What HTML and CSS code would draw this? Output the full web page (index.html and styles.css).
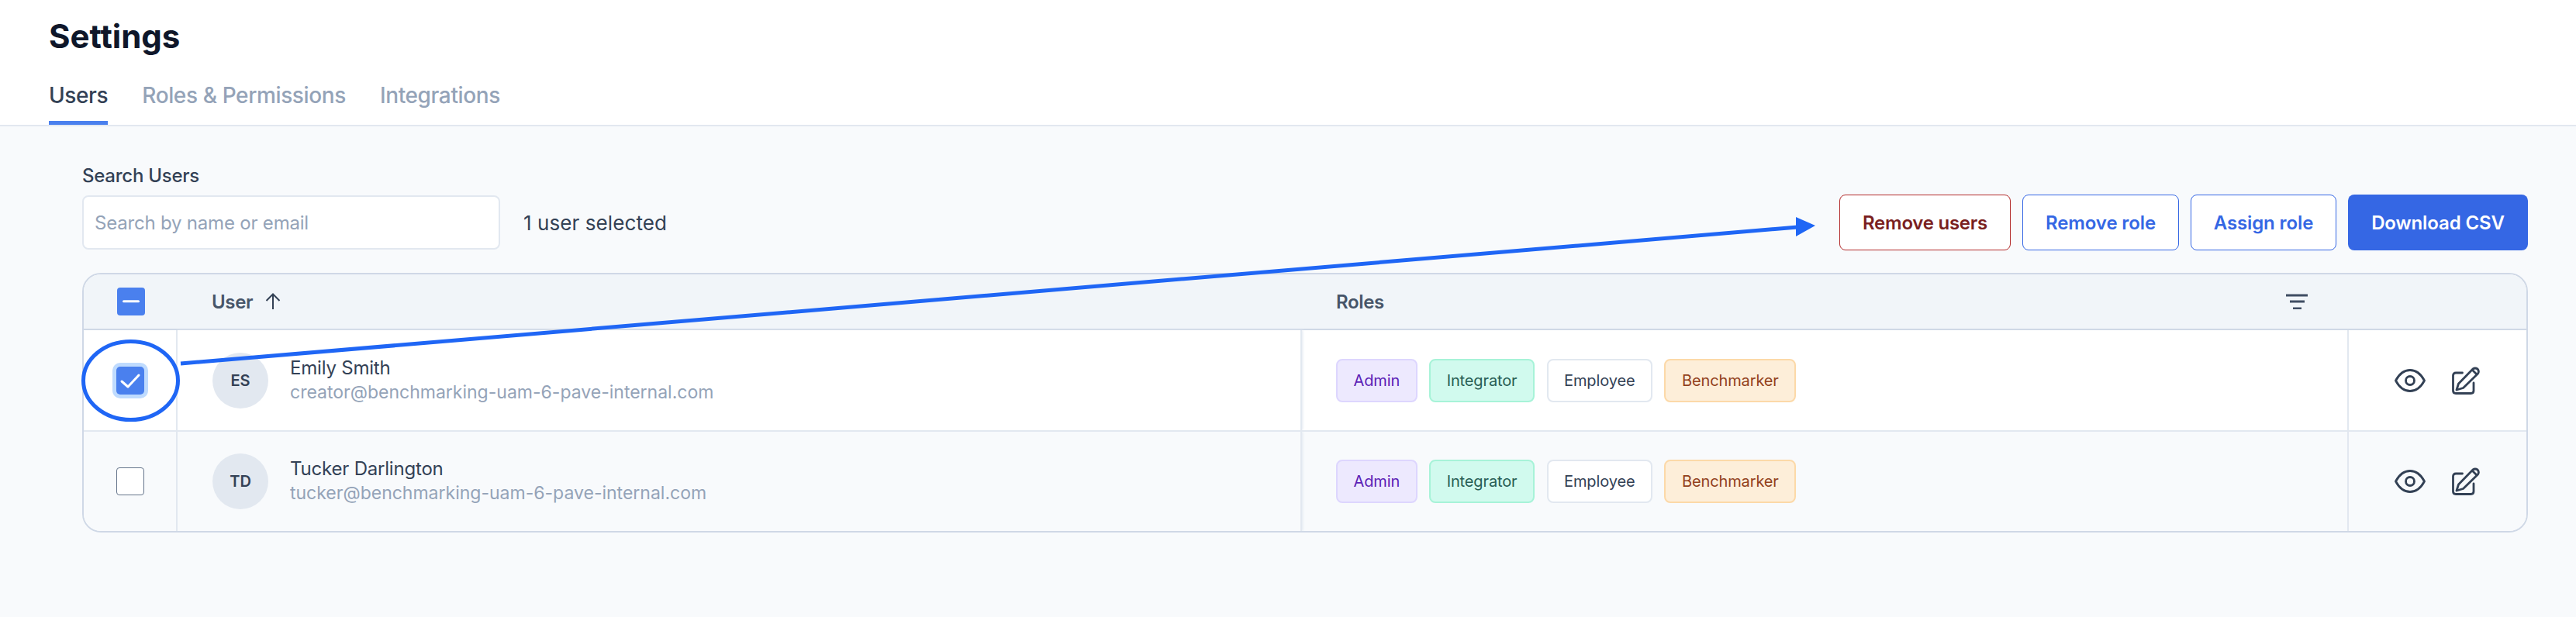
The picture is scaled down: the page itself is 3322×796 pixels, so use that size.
FILE: index.html
```html
<!DOCTYPE html>
<html lang="en">
<head>
<meta charset="utf-8">
<title>Settings</title>
<link rel="stylesheet" href="styles.css">
</head>
<body>
<div class="page">
  <header class="top">
    <h1 class="title">Settings</h1>
    <nav class="tabs">
      <a class="tab active">Users</a>
      <a class="tab">Roles &amp; Permissions</a>
      <a class="tab">Integrations</a>
    </nav>
  </header>
  <main class="main">
    <label class="search-label">Search Users</label>
    <div class="toolbar">
      <div class="search-input">Search by name or email</div>
      <span class="selected">1 user selected</span>
      <div class="actions">
        <button class="btn danger">Remove users</button>
        <button class="btn outline remove">Remove role</button>
        <button class="btn outline assign">Assign role</button>
        <button class="btn primary">Download CSV</button>
      </div>
    </div>
    <section class="table">
      <div class="row head">
        <div class="cell check"><span class="box on"><svg width="36" height="36" viewBox="0 0 36 36"><path d="M8.500 17.700H27.500" class="glyph"/></svg></span></div>
        <div class="cell user-head">User <svg class="sort" width="20" height="22" viewBox="0 0 20 22"><path d="M10 21V1.500M1.500 10L10 1.500L18.500 10"/></svg></div>
        <div class="cell roles-head">Roles <svg class="filter" width="30" height="20" viewBox="0 0 30 20"><path d="M1 2H29M6 10H25M10 19H21"/></svg></div>
        <div class="cell tools"></div>
      </div>
      <div class="row first">
        <div class="cell check div"><span class="box on ring"><svg width="36" height="36" viewBox="0 0 36 36"><path d="M7 19L15 26L29 11" class="glyph"/></svg></span></div>
        <div class="cell user"><span class="avatar">ES</span><div class="who"><div class="name">Emily Smith</div><div class="email">creator@benchmarking-uam-6-pave-internal.com</div></div></div>
        <div class="cell roles">
          <span class="badge admin">Admin</span><span class="badge integrator">Integrator</span><span class="badge employee">Employee</span><span class="badge benchmarker">Benchmarker</span>
        </div>
        <div class="cell tools div">
          <svg class="icon eye" width="40" height="32" viewBox="0 0 40 32"><path d="M1.500 16C6 7.500 12 2.500 20 2.500S34 7.500 38.500 16C34 24.500 28 29.500 20 29.500S6 24.500 1.500 16Z"/><circle cx="20" cy="16" r="5.500"/></svg>
          <svg class="icon pen" width="36" height="36" viewBox="0 0 36 36"><path d="M13.500 8H5Q1.500 8 1.500 11.500V31Q1.500 34.500 5 34.500H24.500Q28 34.500 28 31V21"/><path d="M6 30L8.500 22L27 3Q30 1 33 3Q35.500 6 33.500 9L14.500 27.500Z"/><path d="M26.500 4.500L31.500 9.500"/></svg>
        </div>
      </div>
      <div class="row second">
        <div class="cell check div"><span class="box off"></span></div>
        <div class="cell user"><span class="avatar">TD</span><div class="who"><div class="name">Tucker Darlington</div><div class="email">tucker@benchmarking-uam-6-pave-internal.com</div></div></div>
        <div class="cell roles">
          <span class="badge admin">Admin</span><span class="badge integrator">Integrator</span><span class="badge employee">Employee</span><span class="badge benchmarker">Benchmarker</span>
        </div>
        <div class="cell tools div">
          <svg class="icon eye" width="40" height="32" viewBox="0 0 40 32"><path d="M1.500 16C6 7.500 12 2.500 20 2.500S34 7.500 38.500 16C34 24.500 28 29.500 20 29.500S6 24.500 1.500 16Z"/><circle cx="20" cy="16" r="5.500"/></svg>
          <svg class="icon pen" width="36" height="36" viewBox="0 0 36 36"><path d="M13.500 8H5Q1.500 8 1.500 11.500V31Q1.500 34.500 5 34.500H24.500Q28 34.500 28 31V21"/><path d="M6 30L8.500 22L27 3Q30 1 33 3Q35.500 6 33.500 9L14.500 27.500Z"/><path d="M26.500 4.500L31.500 9.500"/></svg>
        </div>
      </div>
    </section>
  </main>
  <svg class="annotation" width="3322" height="796" viewBox="0 0 3322 796">
    <ellipse cx="168.500" cy="491" rx="61" ry="50.500" class="mark"/>
    <path d="M233 469L2318 293" class="mark"/>
    <path d="M2341 291L2316 280L2316 305Z" class="mark-fill"/>
  </svg>
</div>
</body>
</html>
```
FILE: styles.css
```css
* { box-sizing: border-box; }
html, body { margin: 0; padding: 0; }
body { font-family: Inter, "Liberation Sans", sans-serif; background: #f8fafc; color: #334155; }
.page { position: relative; width: 3322px; height: 796px; overflow: hidden; }
.top { background: #fff; height: 163px; padding: 22px 63px 0; border-bottom: 2px solid #e2e8f0; }
.title { margin: 0; font-size: 42px; line-height: 50px; font-weight: 700; color: #0f172a; }
.tabs { display: flex; gap: 44px; margin-top: 31px; }
.tab { font-size: 28px; line-height: 40px; height: 58px; font-weight: 500; letter-spacing: -0.38px; color: #94a3b8; }
.tab.active { color: #334155; border-bottom: 5px solid #4a80ee; }
.main { padding: 48px 62px 0 106px; }
.search-label { display: block; font-size: 24px; line-height: 32px; font-weight: 500; letter-spacing: -0.25px; color: #334155; }
.toolbar { display: flex; align-items: center; margin-top: 8px; height: 72px; }
.search-input { width: 539px; height: 70px; background: #fff; border: 2px solid #e2e8f0; border-radius: 8px; padding: 0 14px; display: flex; align-items: center; font-size: 24px; letter-spacing: -0.2px; color: #94a3b8; }
.selected { margin-left: 30px; font-size: 26px; letter-spacing: 0.08px; color: #334155; }
.actions { margin-left: auto; display: flex; gap: 15px; }
.btn { height: 72px; font: 600 24px Inter, sans-serif; letter-spacing: -0.12px; border-radius: 8px; background: #fff; padding: 0; }
.danger { width: 221px; border: 1.5px solid #b32b2b; color: #7a1f1f; letter-spacing: -0.25px; }
.outline { border: 1.5px solid #3567e4; color: #3567e4; }
.remove { width: 202px; }
.assign { width: 188px; }
.primary { width: 232px; background: #3567e4; border: 0; color: #fff; }
.table { margin-top: 29px; border: 2px solid #cfd8e6; border-radius: 24px; overflow: hidden; background: #fff; }
.row { display: grid; grid-template-columns: 121px 1450px 1348px 1fr; }
.head { height: 72px; background: #f1f5f9; border-bottom: 2px solid #cfd8e6; }
.first { height: 131px; background: #fff; border-bottom: 2px solid #e2e8f0; }
.second { height: 128px; background: #f8fafc; }
.cell { display: flex; align-items: center; }
.check { justify-content: center; }
.div { border-right: 2px solid #e2e8f0; }
.tools.div { border-right: 0; border-left: 2px solid #e2e8f0; }
.box { width: 36px; height: 36px; border-radius: 4px; display: block; }
.box svg { display: block; }
.box.on { background: #4a80ee; }
.box.off { background: #fff; border: 1.5px solid #64748b; }
.box.ring { box-shadow: 0 0 0 5px #bfdbfe; border-radius: 5px; }
.glyph { fill: none; stroke: #fff; stroke-width: 3; stroke-linecap: round; stroke-linejoin: round; }
.user-head { padding-left: 44px; font-size: 24px; font-weight: 600; letter-spacing: -0.35px; color: #475569; gap: 16px; }
.sort path { fill: none; stroke: #334155; stroke-width: 2; }
.roles-head { padding-left: 44px; font-size: 24px; font-weight: 600; letter-spacing: -0.35px; color: #475569; justify-content: space-between; padding-right: 50px; }
.filter path { fill: none; stroke: #3f4d63; stroke-width: 3; }
.user { padding-left: 45px; gap: 28px; border-right: 2px solid #e2e8f0; box-shadow: 1px 0 3px #e2e8f0; }
.avatar { width: 72px; height: 72px; border-radius: 50%; background: #e2e8f0; display: flex; align-items: center; justify-content: center; font-size: 20px; font-weight: 600; color: #334155; }
.who { margin-top: -2px; }
.name { font-size: 24px; line-height: 32px; letter-spacing: -0.2px; color: #334155; }
.email { font-size: 23px; line-height: 30px; color: #94a3b8; }
.roles { padding-left: 44px; gap: 15.5px; }
.badge { height: 56px; border-radius: 8px; border: 2px solid; display: flex; align-items: center; padding: 0 20.5px; font-size: 20px; letter-spacing: -0.12px; }
.admin { background: #ede9fe; border-color: #ddd6fe; color: #5b21b6; }
.integrator { background: #d1faee; border-color: #a7f3d8; color: #285e55; }
.employee { background: #fff; border-color: #e2e8f0; color: #334155; }
.benchmarker { background: #fdeed9; border-color: #fcd9a8; color: #92401c; }
.tools { padding-left: 59px; gap: 34px; }
.icon path, .icon circle { fill: none; stroke: #334155; stroke-width: 2.8; stroke-linecap: round; stroke-linejoin: round; }
.annotation { position: absolute; left: 0; top: 0; pointer-events: none; }
.mark { fill: none; stroke: #1f66f5; stroke-width: 5; }
.mark-fill { fill: #1f66f5; }
```
